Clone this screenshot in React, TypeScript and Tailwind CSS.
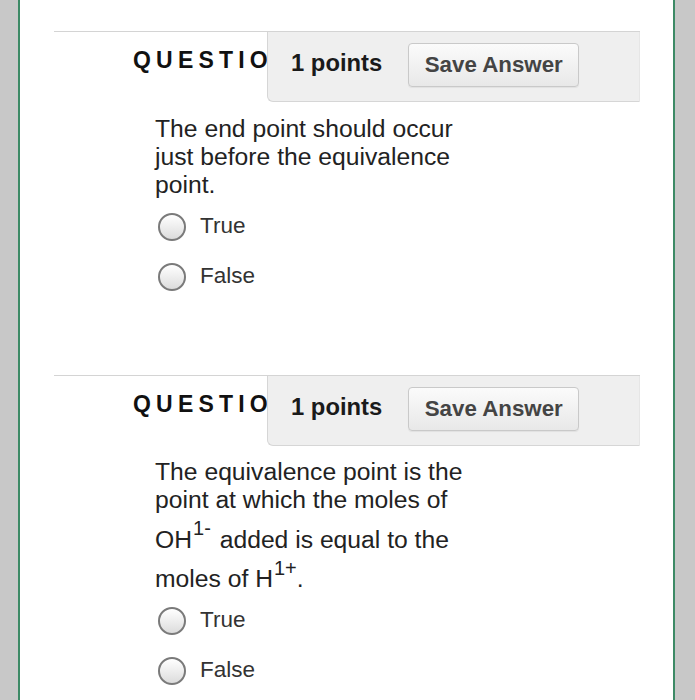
import React from "react";

function Radio({ label, first }: { label: string; first?: boolean }) {
  return (
    <div className={`flex items-center h-[40px] ${first ? "mt-[8px]" : "mt-[10px]"}`}>
      <span className="ml-[3px] w-[28px] h-[28px] rounded-full border-2 border-[#7a7a7a] bg-gradient-to-b from-[#ffffff] to-[#dcdcdc] shrink-0" />
      <span className="ml-[14px] text-[22.5px] text-[#333] leading-[28px] pb-[2px]">{label}</span>
    </div>
  );
}

function Header() {
  return (
    <div className="flex border-t border-[#d4d4d4] h-[71px]">
      <div className="w-[213px] overflow-hidden flex items-center pl-[79px] pb-[13px] whitespace-nowrap">
        <span className="text-[23px] font-bold tracking-[5.2px] text-[#111]">QUESTION 1</span>
      </div>
      <div className="flex-1 bg-[#efefef] border-l border-b border-r border-l-[#d6d6d6] border-b-[#d6d6d6] border-r-[#e6e6e6] rounded-bl-[6px] flex items-center pl-[23px] pb-[4px]">
        <span className="text-[23.8px] font-bold text-[#1a1a1a] pb-[3px]">1 points</span>
        <button className="ml-[26px] w-[171px] h-[44px] rounded-[4px] border border-[#c9c9c9] bg-gradient-to-b from-[#fbfbfb] to-[#e8e8e8] text-[22.3px] font-bold text-[#444] shadow-[0_1px_1px_rgba(0,0,0,0.06)]">
          Save Answer
        </button>
      </div>
    </div>
  );
}

export default function App() {
  return (
    <div
      className="flex w-[695px] h-[700px] overflow-hidden bg-white"
      style={{ fontFamily: '"Liberation Sans", Arial, Helvetica, sans-serif' }}
    >
      <div className="w-[18px] bg-[#c8c8c8] border-r-2 border-[#3d8a66] shrink-0 box-content" />
      <div className="flex-1 bg-white">
        <div className="ml-[34px] w-[586px] mt-[31px]">
          <Header />
          <div className="pl-[101px] mt-[13px] text-[24.7px] leading-[28px] text-[#222] w-[440px]">
            The end point should occur
            <br />
            just before the equivalence
            <br />
            point.
          </div>
          <div className="pl-[101px]">
            <Radio label="True" first />
            <Radio label="False" />
          </div>
        </div>
        <div className="ml-[34px] w-[586px] mt-[78px]">
          <Header />
          <div className="pl-[101px] mt-[12px] text-[24.7px] leading-[28px] text-[#222] w-[460px]">
            The equivalence point is the
            <br />
            point at which the moles of
            <br />
            OH<span className="text-[20px] leading-[28px] align-[13px] ml-[1px] mr-[2px]">1-</span> added is equal to the
            <br />
            moles of H<span className="text-[20px] leading-[28px] align-[12px] ml-[1px]">1+</span>.
          </div>
          <div className="pl-[101px]">
            <Radio label="True" first />
            <Radio label="False" />
          </div>
        </div>
      </div>
      <div className="w-[20px] bg-[#c8c8c8] border-l-2 border-[#3d8a66] shrink-0 box-content" />
    </div>
  );
}
